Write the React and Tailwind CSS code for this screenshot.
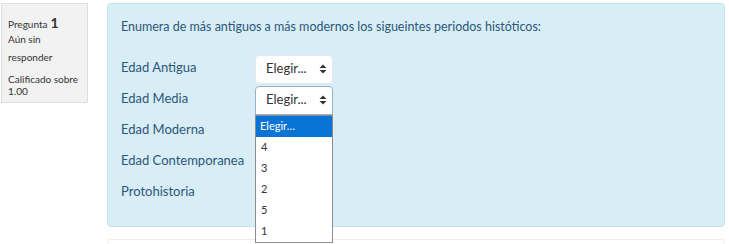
import React from "react";

const rows = ["Edad Antigua", "Edad Media", "Edad Moderna", "Edad Contemporanea", "Protohistoria"];
const options = ["4", "3", "2", "5", "1"];

function Arrows() {
  return (
    <svg width="8" height="10" viewBox="0 0 8 10" className="text-[#333]">
      <path d="M0.5 4 L4 0.5 L7.5 4 Z" fill="currentColor" />
      <path d="M0.5 6 L4 9.5 L7.5 6 Z" fill="currentColor" />
    </svg>
  );
}

function Select({ open }) {
  return (
    <div
      className={`w-[78px] h-[29px] bg-white flex items-center justify-between pl-[10px] pr-[5px] text-[13px] text-[#333] border ${
        open ? "border-[#8fb3cf] rounded-t-[4px]" : "border-[#e3e8ec] rounded-[4px]"
      }`}
    >
      <span>Elegir...</span>
      <Arrows />
    </div>
  );
}

export default function App() {
  return (
    <div className="w-[729px] h-[244px] bg-white overflow-hidden font-['Lato',sans-serif] relative">
      <div className="flex items-start gap-[19px] pt-[3px] pl-[1px]">
        <div className="w-[87px] h-[100px] bg-[#f2f2f2] border border-[#dedede] px-[6px] pt-[10px] text-[10px] leading-[12px] text-[#333]">
          <div className="flex items-baseline gap-[3px] leading-[17px]">
            <span>Pregunta</span>
            <span className="text-[14px] font-bold">1</span>
          </div>
          <div>Aún sin</div>
          <div className="mt-[6px]">responder</div>
          <div className="mt-[10px]">Calificado sobre</div>
          <div>1.00</div>
        </div>
        <div className="flex flex-col gap-[12px]">
          <div className="w-[618px] h-[224px] bg-[#d9edf7] border border-[#c6e2ef] rounded-[4px] pl-[13px] pt-[15px] text-[#2a5878] text-[13px]">
            <p className="leading-[16px] text-[12.5px]">Enumera de más antiguos a más modernos los sigueintes periodos históticos:</p>
            <div className="mt-[19px] flex flex-col gap-[1px]">
              {rows.map((r, i) => (
                <div key={r} className="flex items-center h-[30px]">
                  <span className={`w-[134px] ${i === 0 ? "-mt-[3px]" : "-mt-[2px]"}`}>{r}</span>
                  {i < 2 && <Select open={i === 1} />}
                </div>
              ))}
            </div>
          </div>
          <div className="w-[618px] h-[20px] bg-white border border-[#ececec] rounded-[4px]" />
        </div>
      </div>
      <div className="absolute left-[255px] top-[115px] w-[78px] bg-white border border-[#8d8d8d] text-[11px] text-[#333]">
        <div className="h-[21px] bg-[#0a74d4] text-white flex items-center pl-[4px]">Elegir…</div>
        {options.map((o) => (
          <div key={o} className="h-[21px] flex items-center pl-[5px]">{o}</div>
        ))}
      </div>
    </div>
  );
}
